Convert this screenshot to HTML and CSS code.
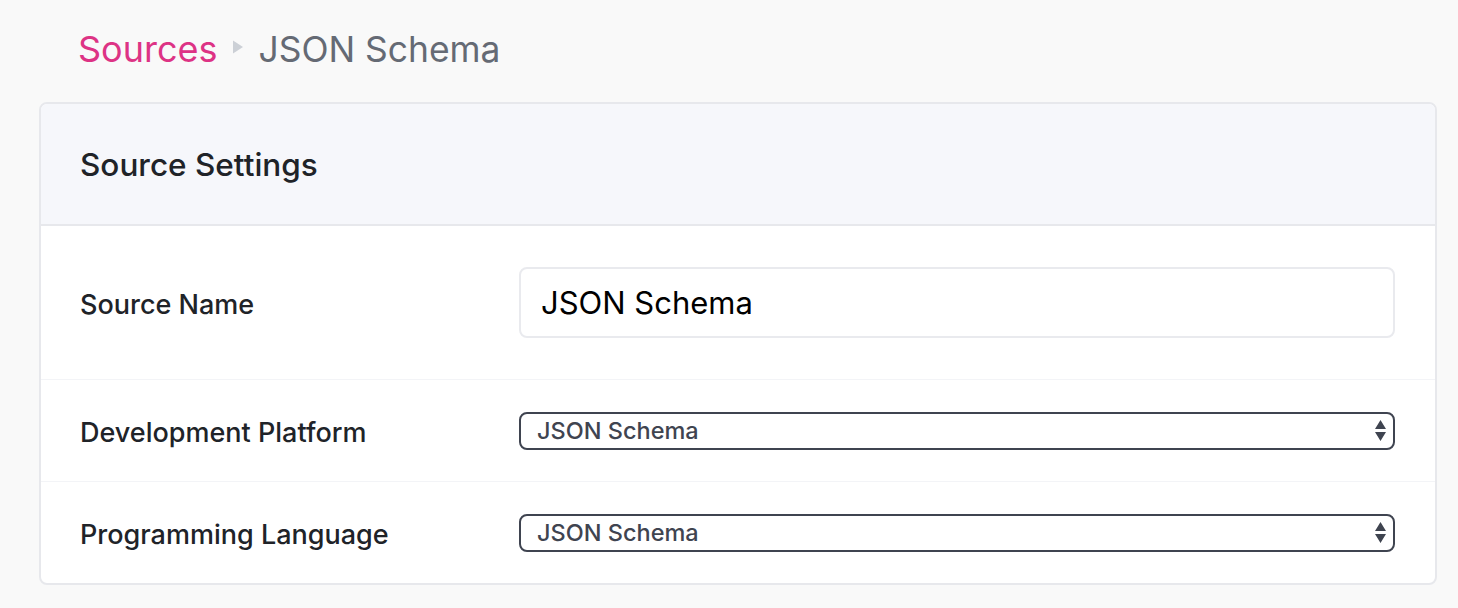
FILE: index.html
```html
<!DOCTYPE html>
<html lang="en">
<head>
<meta charset="utf-8">
<title>JSON Schema</title>
<link rel="stylesheet" href="styles.css">
</head>
<body>
<div class="page">
  <nav class="crumbs">
    <a class="crumb-link" href="#">Sources</a>
    <svg class="crumb-sep" width="10" height="14" viewBox="0 0 10 14"><path d="M0 0.5 L10 7 L0 13.5 Z" fill="#ccd0d6"/></svg>
    <span class="crumb-current">JSON Schema</span>
  </nav>
  <section class="card">
    <header class="card-head">
      <h2 class="card-title">Source Settings</h2>
    </header>
    <div class="row row-tall">
      <label class="label">Source Name</label>
      <div class="field">
        <div class="text-input">JSON Schema</div>
      </div>
    </div>
    <div class="row">
      <label class="label">Development Platform</label>
      <div class="field">
        <div class="select">
          <span class="select-value">JSON Schema</span>
          <svg class="select-arrows" width="11" height="21" viewBox="0 0 11 21"><path d="M5.5 0 L11 9 L0 9 Z M0 12 L11 12 L5.5 21 Z" fill="#3f4450"/></svg>
        </div>
      </div>
    </div>
    <div class="row">
      <label class="label">Programming Language</label>
      <div class="field">
        <div class="select">
          <span class="select-value">JSON Schema</span>
          <svg class="select-arrows" width="11" height="21" viewBox="0 0 11 21"><path d="M5.5 0 L11 9 L0 9 Z M0 12 L11 12 L5.5 21 Z" fill="#3f4450"/></svg>
        </div>
      </div>
    </div>
  </section>
</div>
</body>
</html>
```

FILE: styles.css
```css
* { box-sizing: border-box; }
html, body { margin: 0; padding: 0; }
body {
  background: #f9f9f9;
  font-family: Inter, "Noto Sans", sans-serif;
  color: #202328;
}
.page {
  padding: 22px 21px 0 39px;
}
.crumbs {
  display: flex;
  align-items: center;
  height: 54px;
  padding-left: 39px;
}
.crumb-link {
  color: #dd3385;
  text-decoration: none;
  font-size: 36px;
  font-weight: 400;
}
.crumb-sep {
  display: block;
  margin: 0 15px 5px 16px;
}
.crumb-current {
  color: #656a74;
  font-size: 35.4px;
  font-weight: 400;
}
.card {
  margin-top: 26px;
  background: #fff;
  border: 2px solid #e7e8ec;
  border-radius: 8px;
  overflow: hidden;
}
.card-head {
  background: #f6f7fb;
  height: 122px;
  border-bottom: 2px solid #e7e8ec;
  display: flex;
  align-items: center;
  padding-left: 39px;
}
.card-title {
  margin: 0;
  font-size: 31.5px;
  font-weight: 500;
  color: #202328;
}
.row {
  display: flex;
  align-items: center;
  height: 102px;
  padding: 0 40px 0 39px;
  border-top: 1px solid #f3f4f7;
}
.row-tall {
  height: 153px;
  border-top: none;
}
.label {
  width: 439px;
  flex: none;
  padding-top: 4px;
  font-size: 27px;
  font-weight: 500;
  color: #202328;
}
.field { flex: 1; }
.text-input {
  height: 71px;
  border: 2px solid #e9eaee;
  border-radius: 8px;
  display: flex;
  align-items: center;
  padding-left: 20px;
  font-size: 31px;
  color: #000;
}
.select {
  height: 38px;
  border: 2px solid #3f4450;
  border-radius: 8px;
  display: flex;
  align-items: center;
  justify-content: space-between;
  padding: 0 7px 0 16px;
  color: #3f4450;
}
.select-value {
  font-size: 23.5px;
  font-weight: 500;
}
.select-arrows { display: block; }
```
